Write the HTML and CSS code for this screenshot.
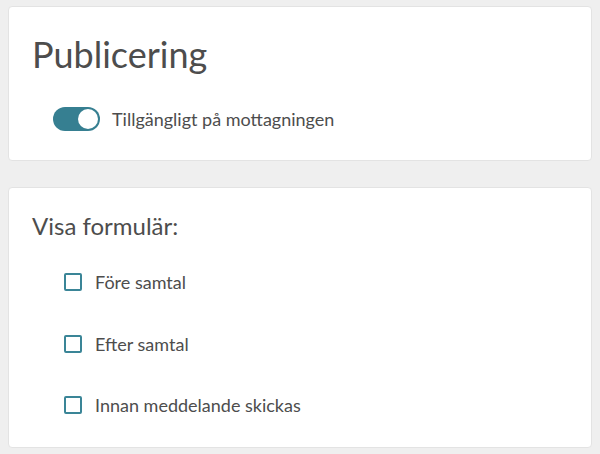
FILE: index.html
```html
<!DOCTYPE html>
<html lang="sv">
<head>
<meta charset="utf-8">
<title>Publicering</title>
<link rel="stylesheet" href="styles.css">
</head>
<body>
<section class="card card-publish">
  <h1 class="title">Publicering</h1>
  <label class="toggle-row">
    <span class="toggle"><span class="knob"></span></span>
    <span class="toggle-label">Tillgängligt på mottagningen</span>
  </label>
</section>
<section class="card card-forms">
  <h2 class="subtitle">Visa formulär:</h2>
  <ul class="options">
    <li class="option"><span class="checkbox"></span><span class="option-label">Före samtal</span></li>
    <li class="option"><span class="checkbox"></span><span class="option-label">Efter samtal</span></li>
    <li class="option"><span class="checkbox"></span><span class="option-label">Innan meddelande skickas</span></li>
  </ul>
</section>
</body>
</html>
```
FILE: styles.css
```css
* { box-sizing: border-box; }
html, body { height: 100%; }
body {
  margin: 0;
  padding: 6px 8px;
  background: #efefef;
  font-family: Lato, "Noto Sans", sans-serif;
  color: #4d4d4d;
  display: flex;
  flex-direction: column;
  gap: 26px;
}
.card {
  background: #fff;
  border: 1px solid #e3e3e3;
  border-radius: 4px;
}
.card-publish {
  height: 155px;
  padding: 27px 24px 0 23px;
}
.title {
  margin: 0;
  font-size: 36px;
  font-weight: 400;
  line-height: 40px;
}
.toggle-row {
  display: flex;
  align-items: center;
  gap: 12px;
  margin-top: 33px;
  padding-left: 21px;
}
.toggle {
  width: 47px;
  height: 24px;
  border-radius: 12px;
  background: #367f91;
  position: relative;
  flex: none;
}
.knob {
  position: absolute;
  right: 2px;
  top: 2px;
  width: 20px;
  height: 20px;
  border-radius: 50%;
  background: #fff;
}
.toggle-label {
  font-size: 18px;
  line-height: 24px;
}
.card-forms {
  height: 261px;
  padding: 22px 24px 0 23px;
}
.subtitle {
  margin: 0;
  font-size: 24px;
  font-weight: 400;
  line-height: 32px;
}
.options {
  list-style: none;
  margin: 28px 0 0 0;
  padding: 0 0 0 32px;
  display: flex;
  flex-direction: column;
  gap: 37.5px;
}
.option {
  display: flex;
  align-items: center;
  gap: 13px;
  height: 24px;
}
.checkbox {
  width: 18px;
  height: 18px;
  border: 2px solid #3a8597;
  border-radius: 2px;
  flex: none;
}
.option-label {
  font-size: 18px;
  line-height: 24px;
}
```
